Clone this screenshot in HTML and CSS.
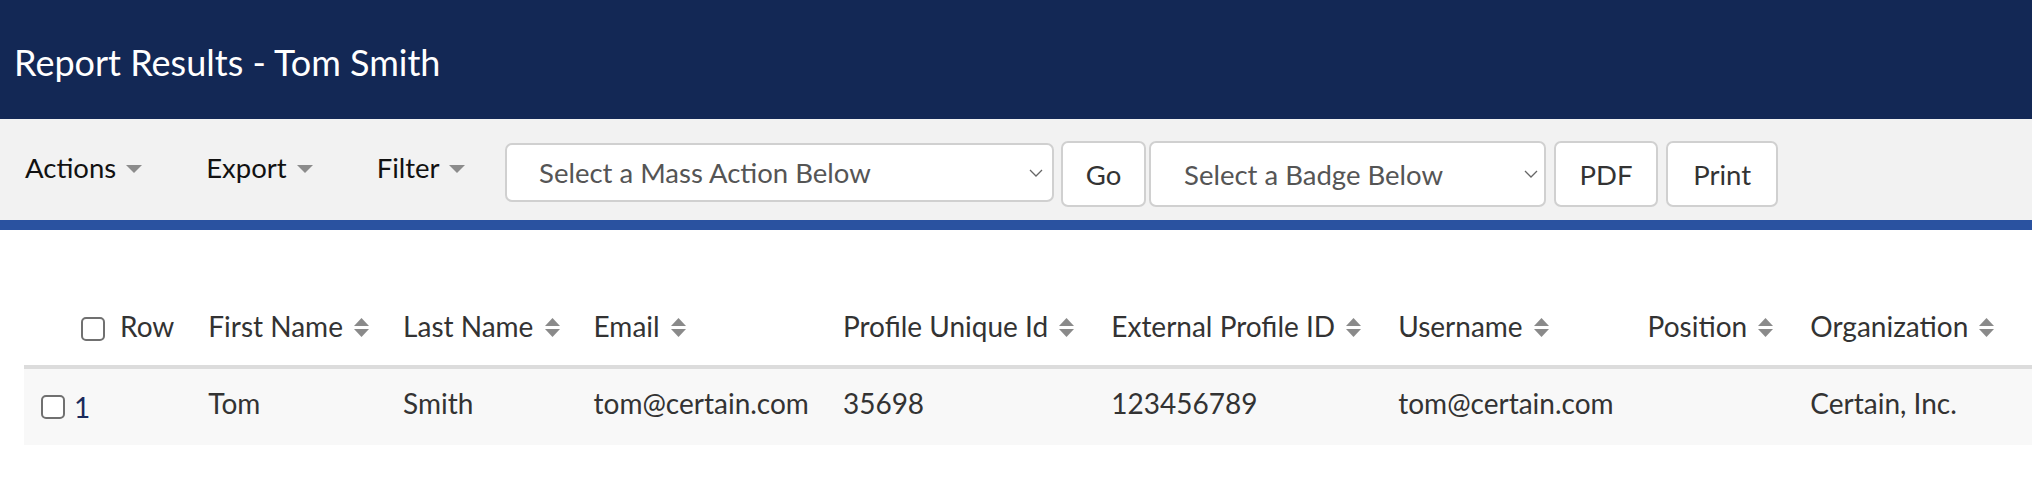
FILE: index.html
```html
<!DOCTYPE html>
<html lang="en">

<head>
    <meta charset="UTF-8">
    <meta name="viewport" content="width=device-width, initial-scale=1.0">
    <title>Report Results - Tom Smith</title>
    <link rel="stylesheet" href="styles.css">
</head>

<body>
    <header class="page-header">
        <h1>Report Results - Tom Smith</h1>
    </header>

    <div class="toolbar">
        <div class="menu">Actions <span class="caret"></span></div>
        <div class="menu">Export <span class="caret"></span></div>
        <div class="menu">Filter <span class="caret"></span></div>

        <div class="select-box mass-select">
            <span>Select a Mass Action Below</span>
            <svg class="chevron" width="14" height="8" viewBox="0 0 14 8"><path d="M1 1 L7 7 L13 1" fill="none" stroke="#666" stroke-width="1.3"/></svg>
        </div>
        <button class="btn go-btn">Go</button>
        <div class="select-box badge-select">
            <span>Select a Badge Below</span>
            <svg class="chevron" width="14" height="8" viewBox="0 0 14 8"><path d="M1 1 L7 7 L13 1" fill="none" stroke="#666" stroke-width="1.3"/></svg>
        </div>
        <button class="btn pdf-btn">PDF</button>
        <button class="btn print-btn">Print</button>
    </div>

    <div class="results">
        <table class="report-table">
            <thead>
                <tr>
                    <th class="row-col"><span class="check"></span>Row</th>
                    <th>First Name <svg class="sort" width="15" height="19" viewBox="0 0 15 19"><path d="M0 8 L7.5 0 L15 8 Z M0 11 L15 11 L7.5 19 Z" fill="#8a8a8a"/></svg></th>
                    <th>Last Name <svg class="sort" width="15" height="19" viewBox="0 0 15 19"><path d="M0 8 L7.5 0 L15 8 Z M0 11 L15 11 L7.5 19 Z" fill="#8a8a8a"/></svg></th>
                    <th>Email <svg class="sort" width="15" height="19" viewBox="0 0 15 19"><path d="M0 8 L7.5 0 L15 8 Z M0 11 L15 11 L7.5 19 Z" fill="#8a8a8a"/></svg></th>
                    <th class="wide-col">Profile Unique Id <svg class="sort" width="15" height="19" viewBox="0 0 15 19"><path d="M0 8 L7.5 0 L15 8 Z M0 11 L15 11 L7.5 19 Z" fill="#8a8a8a"/></svg></th>
                    <th class="wide-col">External Profile ID <svg class="sort" width="15" height="19" viewBox="0 0 15 19"><path d="M0 8 L7.5 0 L15 8 Z M0 11 L15 11 L7.5 19 Z" fill="#8a8a8a"/></svg></th>
                    <th>Username <svg class="sort" width="15" height="19" viewBox="0 0 15 19"><path d="M0 8 L7.5 0 L15 8 Z M0 11 L15 11 L7.5 19 Z" fill="#8a8a8a"/></svg></th>
                    <th class="wide-col">Position <svg class="sort" width="15" height="19" viewBox="0 0 15 19"><path d="M0 8 L7.5 0 L15 8 Z M0 11 L15 11 L7.5 19 Z" fill="#8a8a8a"/></svg></th>
                    <th class="org-col">Organization <svg class="sort" width="15" height="19" viewBox="0 0 15 19"><path d="M0 8 L7.5 0 L15 8 Z M0 11 L15 11 L7.5 19 Z" fill="#8a8a8a"/></svg></th>
                    <th>Attendee Type <svg class="sort" width="15" height="19" viewBox="0 0 15 19"><path d="M0 8 L7.5 0 L15 8 Z M0 11 L15 11 L7.5 19 Z" fill="#8a8a8a"/></svg></th>
                </tr>
            </thead>
            <tbody>
                <tr>
                    <td class="row-col"><div class="row-cell"><span class="check"></span><a href="#">1</a></div></td>
                    <td>Tom</td>
                    <td>Smith</td>
                    <td>tom@certain.com</td>
                    <td class="wide-col">35698</td>
                    <td class="wide-col">123456789</td>
                    <td>tom@certain.com</td>
                    <td class="wide-col"></td>
                    <td class="org-col">Certain, Inc.</td>
                    <td>Speaker</td>
                </tr>
            </tbody>
        </table>
    </div>
</body>

</html>
```

FILE: styles.css
```css
body {
    margin: 0;
    font-family: Lato, "Open Sans", sans-serif;
    background-color: #fff;
    color: #333;
    overflow: hidden;
}

.page-header {
    height: 119px;
    box-sizing: border-box;
    display: flex;
    align-items: center;
    padding: 4px 14px 0;
    background-color: #132855;
}

.page-header h1 {
    margin: 0;
    font-size: 36px;
    font-weight: normal;
    color: #fff;
}

.toolbar {
    height: 111px;
    box-sizing: border-box;
    display: flex;
    align-items: center;
    padding: 9px 0 0 25px;
    background-color: #f2f2f2;
    border-bottom: 10px solid #2a52a0;
}

.menu {
    font-size: 27.5px;
    color: #111;
    margin-right: 64px;
    margin-bottom: 14px;
    white-space: nowrap;
}

.menu:nth-child(3) {
    margin-right: 40px;
}

.caret {
    display: inline-block;
    width: 0;
    height: 0;
    margin-left: 3px;
    border-left: 8px solid transparent;
    border-right: 8px solid transparent;
    border-top: 8px solid #8c8c8c;
    vertical-align: 5px;
}

.select-box {
    display: flex;
    align-items: center;
    justify-content: space-between;
    box-sizing: border-box;
    background-color: #fff;
    border: 2px solid #d0d0d0;
    border-radius: 7px;
    font-size: 27.5px;
    color: #555;
}

.mass-select {
    width: 549px;
    height: 59px;
    padding: 0 9px 0 32px;
    margin-top: -3px;
}

.badge-select {
    width: 397px;
    height: 66px;
    padding: 0 6px 0 33px;
    margin-right: 8px;
}

.chevron {
    flex-shrink: 0;
}

.btn {
    height: 66px;
    box-sizing: border-box;
    background-color: #fff;
    border: 2px solid #d0d0d0;
    border-radius: 7px;
    font-family: Lato, "Open Sans", sans-serif;
    font-size: 27.5px;
    color: #333;
    padding: 0;
}

.go-btn {
    width: 85px;
    margin: 0 3px 0 7px;
}

.pdf-btn {
    width: 104px;
    margin-right: 8px;
}

.print-btn {
    width: 112px;
}

.results {
    padding: 60px 0 0 24px;
    overflow: hidden;
}

.report-table {
    border-collapse: collapse;
    font-size: 28px;
    white-space: nowrap;
}

.report-table th {
    font-weight: normal;
    text-align: left;
    color: #333;
    padding: 19px 17px 22px;
    border-bottom: 4px solid #dcdcdc;
}

.report-table th.row-col {
    padding-left: 57px;
}

.report-table td {
    background-color: #f8f8f8;
    color: #333;
    padding: 17px 17px 25px;
}

.report-table td.row-col {
    padding-top: 21px;
    padding-bottom: 21px;
}

.report-table .wide-col {
    padding-right: 20px;
}

.report-table .org-col {
    padding-right: 52px;
}

.sort {
    margin-left: 4px;
}

.check {
    display: inline-block;
    width: 24px;
    height: 24px;
    box-sizing: border-box;
    border: 2px solid #707070;
    border-radius: 5px;
    background-color: #fff;
    vertical-align: -4px;
    margin-right: 15px;
}

.row-cell {
    display: flex;
    align-items: center;
}

.row-cell .check {
    margin-right: 9px;
}

.row-cell a {
    color: #1b2a5c;
    text-decoration: none;
}
```
